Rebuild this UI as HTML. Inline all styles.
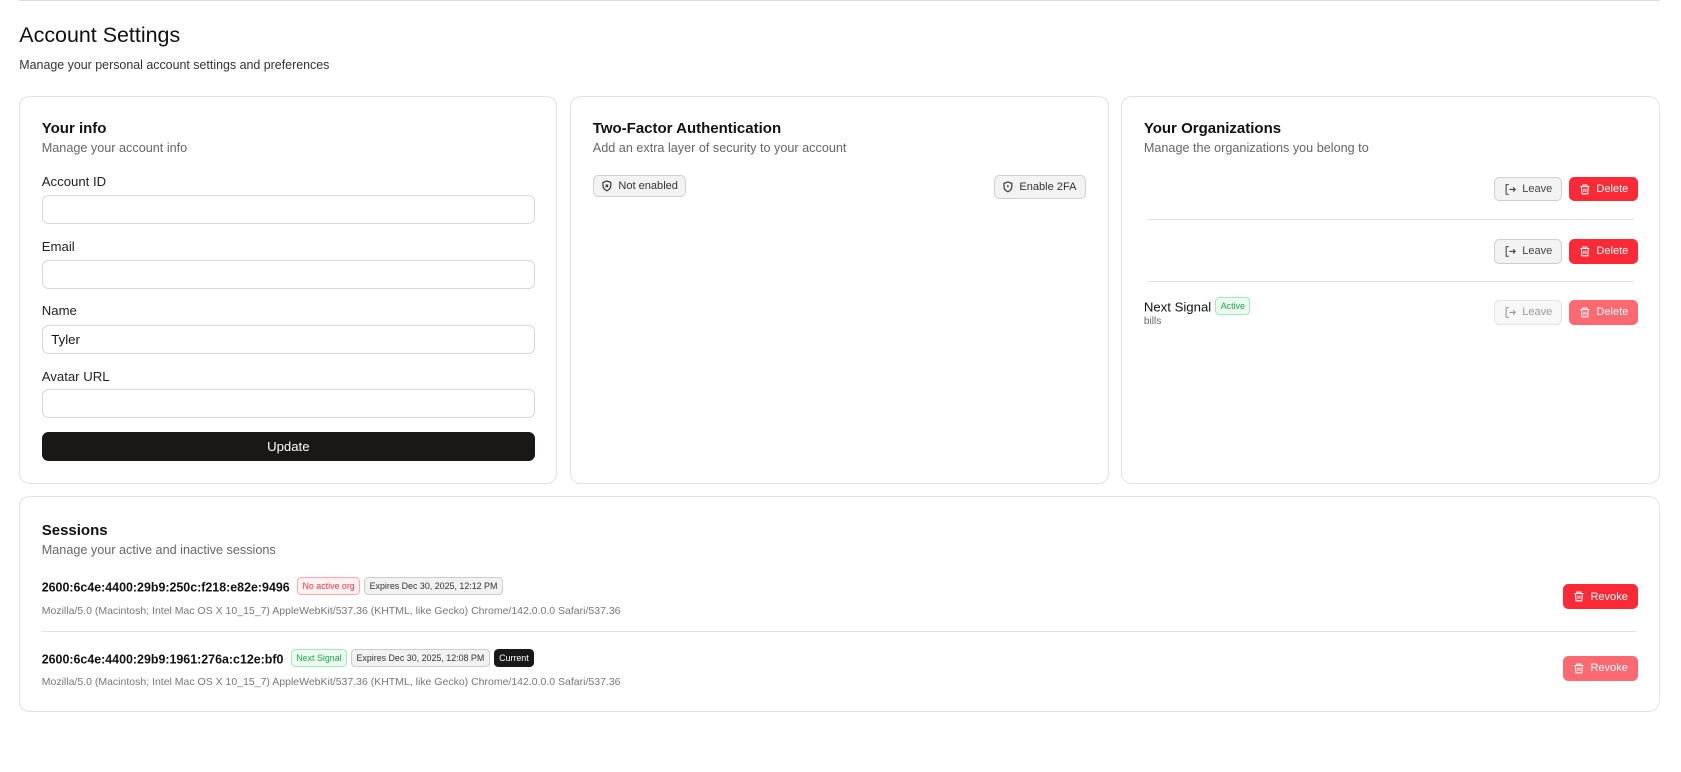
<!DOCTYPE html>
<html><head><meta charset="utf-8"><style>
*{box-sizing:border-box;margin:0;padding:0}
html,body{width:1681px;height:772px;overflow:hidden;background:#fff}
body{font-family:"Liberation Sans",sans-serif;color:#111}
#w{zoom:1.0721;position:relative;width:1568px;height:720px}
.a{position:absolute}
.card{position:absolute;border:1px solid #e2e2e2;border-radius:10px;background:#fff}
.h{font-size:14px;font-weight:bold;color:#111}
.s{font-size:11.8px;color:#666}
.lbl{font-size:12.3px;color:#222}
.in{position:absolute;left:20px;width:460px;height:27px;border:1px solid #d6d6d6;border-radius:6px;font-size:12.3px;padding:6px 8px;color:#111}
.bd{position:absolute;height:21px;border:1px solid #cfcfcf;background:#f3f3f3;border-radius:5px;font-size:10.3px;color:#333;display:flex;align-items:center;gap:5px;padding:0 7px}
.btn{position:absolute;height:23px;border-radius:5px;font-size:10.3px;display:flex;align-items:center;justify-content:center;gap:5px}
.lv{border:1px solid #cfcfcf;background:#f3f3f3;color:#444;width:63px}
.dl{background:#fb2a36;color:#fff;width:64px}
.sep{position:absolute;height:1px;background:#e0e0e0}
.tag{display:inline-block;font-size:8.3px;padding:3px 4px;border-radius:4px;border:1px solid;vertical-align:2px;margin-left:4px;font-weight:normal}
</style></head><body><div id="w">
<div class="a" style="left:18px;top:0;width:1530px;height:1px;background:#ddd"></div>
<div class="a" style="left:18px;top:21px;font-size:20px;color:#111">Account Settings</div>
<div class="a" style="left:18px;top:54px;font-size:11.6px;color:#333">Manage your personal account settings and preferences</div>

<div class="card" style="left:18px;top:90px;width:502px;height:361px">
<div class="a h" style="left:20px;top:21px">Your info</div>
<div class="a s" style="left:20px;top:41px">Manage your account info</div>
<div class="a lbl" style="left:20px;top:71px">Account ID</div>
<div class="in" style="top:91px"></div>
<div class="a lbl" style="left:20px;top:132px">Email</div>
<div class="in" style="top:152px"></div>
<div class="a lbl" style="left:20px;top:192px">Name</div>
<div class="in" style="top:212px">Tyler</div>
<div class="a lbl" style="left:20px;top:253px">Avatar URL</div>
<div class="in" style="top:272px"></div>
<div class="a" style="left:20px;top:312px;width:460px;height:27px;background:#1a1816;border-radius:6px;color:#fff;font-size:12.3px;display:flex;align-items:center;justify-content:center">Update</div>
</div>

<div class="card" style="left:532px;top:90px;width:502px;height:361px">
<div class="a h" style="left:20px;top:21px">Two-Factor Authentication</div>
<div class="a s" style="left:20px;top:41px">Add an extra layer of security to your account</div>
<div class="bd" style="left:20px;top:72px"><svg width="11" height="11" viewBox="0 0 24 24" fill="none" stroke="#333" stroke-width="2.4"><path d="M12 2l8 3v6c0 5-3.5 9-8 11-4.5-2-8-6-8-11V5z"/><path d="M9.5 9.5l5 5M14.5 9.5l-5 5"/></svg>Not enabled</div>
<div class="bd" style="left:394px;top:72px;height:23px;width:86px"><svg width="11" height="11" viewBox="0 0 24 24" fill="none" stroke="#333" stroke-width="2.4"><path d="M12 2l8 3v6c0 5-3.5 9-8 11-4.5-2-8-6-8-11V5z"/><path d="M12 8v5"/></svg>Enable 2FA</div>
</div>

<div class="card" style="left:1046px;top:90px;width:502px;height:361px">
<div class="a h" style="left:20px;top:21px">Your Organizations</div>
<div class="a s" style="left:20px;top:41px">Manage the organizations you belong to</div>
<div class="btn lv" style="left:347px;top:74px"><svg width="12" height="12" viewBox="0 0 24 24" fill="none" stroke="#444" stroke-width="2"><path d="M9 3H4v18h5M10 12h11M17 8l4 4-4 4"/></svg>Leave</div>
<div class="btn dl" style="left:417px;top:74px"><svg width="11" height="12" viewBox="0 0 24 24" fill="none" stroke="#fff" stroke-width="2.2"><path d="M3 6h18M8 6V3h8v3M5 6l1 15h12l1-15M10 10v7M14 10v7"/></svg>Delete</div>
<div class="sep" style="left:24px;top:113px;width:453px"></div>
<div class="btn lv" style="left:347px;top:132px"><svg width="12" height="12" viewBox="0 0 24 24" fill="none" stroke="#444" stroke-width="2"><path d="M9 3H4v18h5M10 12h11M17 8l4 4-4 4"/></svg>Leave</div>
<div class="btn dl" style="left:417px;top:132px"><svg width="11" height="12" viewBox="0 0 24 24" fill="none" stroke="#fff" stroke-width="2.2"><path d="M3 6h18M8 6V3h8v3M5 6l1 15h12l1-15M10 10v7M14 10v7"/></svg>Delete</div>
<div class="sep" style="left:24px;top:171px;width:453px"></div>
<div class="a" style="left:20px;top:186px;font-size:12.3px">Next Signal<span class="tag" style="color:#22a34a;border-color:#a8e6bb;background:#eafbef">Active</span></div>
<div class="a" style="left:20px;top:204px;font-size:9.5px;color:#666">bills</div>
<div class="btn lv" style="left:347px;top:189px;opacity:.55"><svg width="12" height="12" viewBox="0 0 24 24" fill="none" stroke="#444" stroke-width="2"><path d="M9 3H4v18h5M10 12h11M17 8l4 4-4 4"/></svg>Leave</div>
<div class="btn dl" style="left:417px;top:189px;opacity:.7"><svg width="11" height="12" viewBox="0 0 24 24" fill="none" stroke="#fff" stroke-width="2.2"><path d="M3 6h18M8 6V3h8v3M5 6l1 15h12l1-15M10 10v7M14 10v7"/></svg>Delete</div>
</div>

<div class="card" style="left:18px;top:463px;width:1530px;height:201px">
<div class="a h" style="left:20px;top:23px">Sessions</div>
<div class="a s" style="left:20px;top:43px">Manage your active and inactive sessions</div>
<div class="a" style="left:20px;top:74px;font-size:11.6px;font-weight:bold">2600:6c4e:4400:29b9:250c:f218:e82e:9496<span class="tag" style="color:#f03a46;border-color:#f7a7ad;background:#fff0f1;margin-left:7px">No active org</span><span class="tag" style="color:#333;border-color:#ccc;background:#f2f2f2">Expires Dec 30, 2025, 12:12 PM</span></div>
<div class="a" style="left:20px;top:100px;font-size:9.8px;color:#777">Mozilla/5.0 (Macintosh; Intel Mac OS X 10_15_7) AppleWebKit/537.36 (KHTML, like Gecko) Chrome/142.0.0.0 Safari/537.36</div>
<div class="sep" style="left:20px;top:125px;width:1487px"></div>
<div class="a" style="left:20px;top:141px;font-size:11.6px;font-weight:bold">2600:6c4e:4400:29b9:1961:276a:c12e:bf0<span class="tag" style="color:#22a34a;border-color:#a8e6bb;background:#eafbef;margin-left:7px">Next Signal</span><span class="tag" style="color:#333;border-color:#ccc;background:#f2f2f2">Expires Dec 30, 2025, 12:08 PM</span><span class="tag" style="color:#fff;border-color:#1a1816;background:#1a1816">Current</span></div>
<div class="a" style="left:20px;top:167px;font-size:9.8px;color:#777">Mozilla/5.0 (Macintosh; Intel Mac OS X 10_15_7) AppleWebKit/537.36 (KHTML, like Gecko) Chrome/142.0.0.0 Safari/537.36</div>
<div class="btn dl" style="left:1439px;top:81px;width:70px"><svg width="11" height="12" viewBox="0 0 24 24" fill="none" stroke="#fff" stroke-width="2.2"><path d="M3 6h18M8 6V3h8v3M5 6l1 15h12l1-15M10 10v7M14 10v7"/></svg>Revoke</div>
<div class="btn dl" style="left:1439px;top:148px;width:70px;opacity:.7"><svg width="11" height="12" viewBox="0 0 24 24" fill="none" stroke="#fff" stroke-width="2.2"><path d="M3 6h18M8 6V3h8v3M5 6l1 15h12l1-15M10 10v7M14 10v7"/></svg>Revoke</div>
</div>
</div></body></html>
